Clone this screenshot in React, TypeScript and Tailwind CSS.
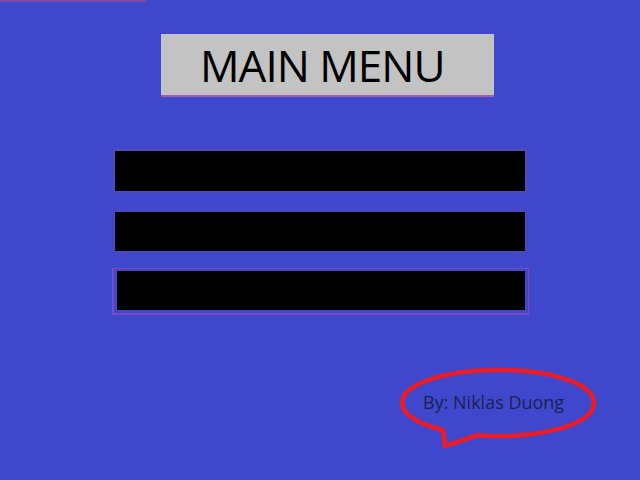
export default function App() {
  return (
    <div className="relative w-[640px] h-[480px] overflow-hidden bg-[#3f48cc] font-['Open_Sans',sans-serif]">
      <div className="absolute top-0 left-0 w-[147px] h-[2px] bg-[#7b4aa8]"></div>

      <div className="pt-[34px] pl-[161px]">
        <div className="w-[333px] h-[63px] bg-[#c3c3c3] border-b-2 border-[#a35fae] flex items-center pl-[39px]">
          <span className="text-[44px] leading-none text-black tracking-[-1px]">MAIN MENU</span>
        </div>
      </div>

      <div className="flex flex-col pl-[113px] pt-[52px]">
        <div className="w-[414px] h-[44px] border-2 border-[#5846b6] bg-black"></div>
        <div className="w-[414px] h-[43px] mt-[17px] border-2 border-[#4a46c0] bg-black"></div>
        <div className="w-[417px] h-[47px] mt-[15px] -ml-[1px] border-l-2 border-b-2 border-t border-r border-[#7a4ac4] pl-[3px] pt-[2px] pr-[3px] pb-[3px]">
          <div className="w-full h-full bg-black"></div>
        </div>
      </div>

      <svg className="absolute left-[398px] top-[364px]" width="204" height="90" viewBox="0 0 204 90">
        <path
          d="M 45 66 C 20 60 4 50 4 39 C 4 20 48 6 101 6 C 154 6 196 20 196 39 C 196 58 154 72 101 72 C 92 72 86 72 80 71 L 47 82 L 45 66 Z"
          fill="none"
          stroke="#ed1c24"
          strokeWidth="4.5"
          strokeLinejoin="round"
        />
      </svg>
      <div className="absolute left-[423px] top-[393px] text-[18px] leading-none text-[#1c1f52]">
        By: Niklas Duong
      </div>
    </div>
  )
}
